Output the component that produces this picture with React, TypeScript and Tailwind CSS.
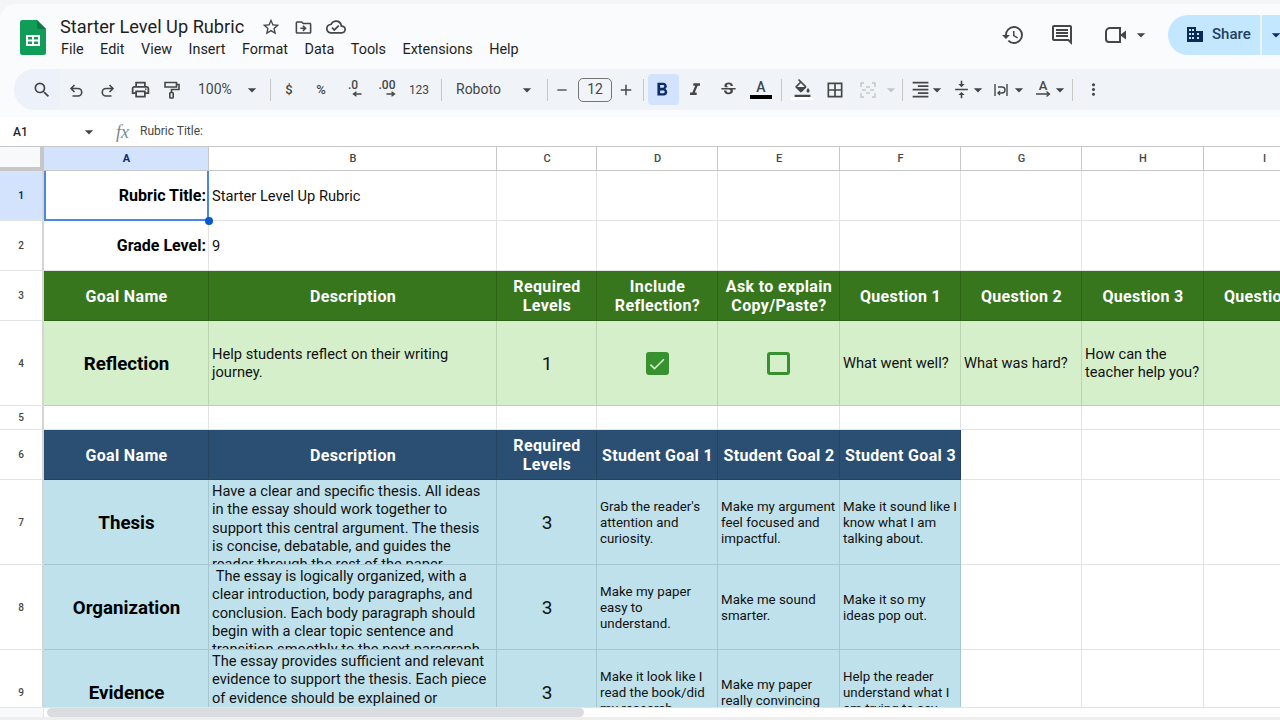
import React from "react";
import {
  MdStarBorder, MdOutlineDriveFileMove, MdOutlineCloudDone, MdHistory, MdOutlineComment,
  MdArrowDropDown, MdSearch, MdOutlinePrint, MdAdd, MdRemove,
  MdFormatBold, MdFormatItalic, MdStrikethroughS, MdFormatColorFill, MdBorderAll, MdFormatAlignRight,
  MdVerticalAlignCenter, MdMoreVert, MdCheck,
} from "react-icons/md";

const Caret = ({ cls = "text-[#444746]" }: { cls?: string }) => <MdArrowDropDown className={"text-[20px] shrink-0 " + cls} />;
const Divider = () => <div className="w-px h-[22px] bg-[#c7c7c7] shrink-0" />;

function Slot({ cls, children }: { cls: string; children?: React.ReactNode }) {
  return <div className={"flex items-center justify-center shrink-0 text-[#444746] " + cls}>{children}</div>;
}

function Logo() {
  return (
    <svg width="26" height="35" viewBox="0 0 26 35" className="shrink-0">
      <path d="M2.5 0H17l9 9v23.5a2.5 2.5 0 0 1-2.5 2.5h-21A2.5 2.5 0 0 1 0 32.500V2.500A2.500 2.500 0 0 1 2.500 0z" fill="#0f9d58" />
      <path d="M17 0l9 9h-7a2 2 0 0 1-2-2z" fill="#0b7a45" />
      <path d="M6 15h14v11H6zM8 17v2.500h4V17zm6 0v2.500h4V17zm-6 4.500V24h4v-2.500zm6 0V24h4v-2.500z" fill="#fff" fillRule="evenodd" />
    </svg>
  );
}

function UndoIcon({ flip }: { flip?: boolean }) {
  return (
    <svg width="14" height="14" viewBox="0 0 14 14" fill="none" stroke="#444746" strokeWidth="1.600" className={"mt-[2px] " + (flip ? "-scale-x-100" : "")}>
      <path d="M5.500 1L2 4.500 5.500 8M2.500 4.500H9a3.700 3.700 0 0 1 0 7.500H3.500" />
    </svg>
  );
}

function RollerIcon() {
  return (
    <svg width="16" height="18" viewBox="0 0 16 18" fill="none" stroke="#444746" strokeWidth="1.600">
      <path d="M1 1.500h11.500v4.500H1zM12.500 3.500H15v5H7.500v3" />
      <rect x="5.800" y="11.500" width="3.400" height="5.500" rx="0.800" />
    </svg>
  );
}

function VideoIcon() {
  return (
    <svg width="22" height="18" viewBox="0 0 22 18" fill="none" stroke="#444746" strokeWidth="2">
      <path d="M5 2h10v14H4a3 3 0 0 1-3-3V6a4 4 0 0 1 4-4z" />
      <path d="M15 9l6-4.500v9z" fill="#444746" stroke="none" />
    </svg>
  );
}

function BuildingIcon() {
  return (
    <svg width="16" height="15" viewBox="0 0 16 15" className="shrink-0">
      <path d="M0 0h9v4h7v11H0zM2 2v2h2V2zm3 0v2h2V2zM2 6v2h2V6zm3 0v2h2V6zM2 10v2h2v-2zm3 0v2h2v-2zm5-4v2h2V6zm0 4v2h2v-2z" fill="#0b2b55" fillRule="evenodd" />
    </svg>
  );
}

function Decimal({ label, right }: { label: string; right?: boolean }) {
  return (
    <div className="flex flex-col items-center leading-none">
      <span className="text-[12px] font-medium text-[#444746] leading-[12px] -mt-[3px]">{label}</span>
      <svg width="10" height="6" viewBox="0 0 10 6" className="ml-[8px]">
        {right ? <path d="M0.500 3h7M5.500 0.800L8.500 3 5.500 5.200" stroke="#444746" strokeWidth="1.400" fill="none" /> : <path d="M9.500 3h-7M4.500 0.800L1.500 3 4.500 5.200" stroke="#444746" strokeWidth="1.400" fill="none" />}
      </svg>
    </div>
  );
}

function MergeIcon() {
  return (
    <svg width="18" height="18" viewBox="0 0 18 18" fill="none" stroke="#c4c7c5" strokeWidth="1.500">
      <path d="M5 2H2v4M5 16H2v-4M13 2h3v4M13 16h3v-4M8 5v2M8 11v2M10 5v2M10 11v2" />
      <path d="M3 9h4M15 9h-4" />
    </svg>
  );
}

function WrapIcon() {
  return (
    <svg width="16" height="16" viewBox="0 0 16 16" fill="none" stroke="#444746" strokeWidth="1.400">
      <path d="M2 2v12M14 2v12M5 5h4a2.500 2.500 0 0 1 0 6H5M7 9l-2 2 2 2" />
    </svg>
  );
}

function RotateIcon() {
  return (
    <div className="flex flex-col items-center leading-none">
      <span className="text-[13px] font-medium text-[#444746] leading-[11px] -mt-[2px]">A</span>
      <svg width="15" height="6" viewBox="0 0 15 6" fill="none" stroke="#444746" strokeWidth="1.300">
        <path d="M0 3h13M10.500 0.500L13.500 3 10.500 5.500" />
      </svg>
    </div>
  );
}

function Header() {
  return (
    <div className="bg-[#f5f5f5] pt-[4px] shrink-0">
      <div className="bg-[#fafbfd] rounded-tl-[16px] h-[113px] flex flex-col">
        <div className="h-[65px] flex shrink-0">
          <div className="pl-[20px] pt-[16px]"><Logo /></div>
          <div className="pl-[14px] pt-[12px] flex flex-col">
            <div className="flex items-center h-[22px]">
              <span className="text-[18.200px] text-[#1f1f1f] leading-[22px] w-[202px] whitespace-nowrap">Starter Level Up Rubric</span>
              <MdStarBorder className="text-[20px] text-[#444746] ml-[-1px] mr-[13px]" />
              <MdOutlineDriveFileMove className="text-[19px] text-[#444746] mr-[13px]" />
              <MdOutlineCloudDone className="text-[20px] text-[#444746]" />
            </div>
            <div className="flex gap-[16.500px] text-[14.400px] text-[#1f1f1f] leading-[18px] mt-[3px] pl-[1px]">
              {["File", "Edit", "View", "Insert", "Format", "Data", "Tools", "Extensions", "Help"].map((m) => <span key={m}>{m}</span>)}
            </div>
          </div>
          <div className="ml-auto flex items-center h-[58px] pt-[3px]">
            <Slot cls="w-[32px]"><MdHistory className="text-[24px]" /></Slot>
            <Slot cls="w-[32px] ml-[17px]"><MdOutlineComment className="text-[24px]" /></Slot>
            <Slot cls="w-[32px] ml-[22px]"><VideoIcon /></Slot>
            <Slot cls="w-[16px] ml-[1px]"><Caret /></Slot>
            <div className="ml-[19px] w-[112px] h-[40px] rounded-l-full bg-[#c2e7ff] flex items-center overflow-hidden shrink-0">
              <div className="ml-[19px] shrink-0"><BuildingIcon /></div>
              <span className="text-[15px] font-medium ml-[9px] w-[48px] shrink-0 text-[#24405f]">Share</span>
              <div className="w-[2px] h-[40px] bg-[#eaf6fe] shrink-0" />
              <Caret cls="text-[#062e6f] ml-[4px]" />
            </div>
          </div>
        </div>
        <div className="h-[41px] ml-[14px] bg-[#f0f4f9] rounded-l-full flex items-center shrink-0">
          <div className="w-[46px] h-[41px] bg-[#edf2fa] rounded-l-full flex items-center pl-[18px] text-[#444746] shrink-0"><MdSearch className="text-[20px]" /></div>
          <Slot cls="w-[32px]"><UndoIcon /></Slot>
          <Slot cls="w-[32px]"><UndoIcon flip /></Slot>
          <Slot cls="w-[32px]"><MdOutlinePrint className="text-[21px]" /></Slot>
          <Slot cls="w-[32px]"><RollerIcon /></Slot>
          <Slot cls="w-[56px] justify-start pl-[10px]"><span className="text-[14px]">100%</span></Slot>
          <Slot cls="w-[16px]"><Caret /></Slot>
          <div className="w-[10px] shrink-0" />
          <Divider />
          <Slot cls="w-[32px] ml-[2px]"><span className="text-[13px] font-medium">$</span></Slot>
          <Slot cls="w-[32px]"><span className="text-[13px] font-medium">%</span></Slot>
          <Slot cls="w-[32px]"><Decimal label=".0" /></Slot>
          <Slot cls="w-[32px] ml-[2px]"><Decimal label=".00" right /></Slot>
          <Slot cls="w-[32px]"><span className="text-[12px]">123</span></Slot>
          <div className="w-[6px] shrink-0" />
          <Divider />
          <Slot cls="w-[60px] justify-start pl-[14px]"><span className="text-[14px]">Roboto</span></Slot>
          <Slot cls="w-[16px] ml-[17px]"><Caret /></Slot>
          <div className="w-[12px] shrink-0" />
          <Divider />
          <Slot cls="w-[28px]"><MdRemove className="text-[16px]" /></Slot>
          <div className="w-[34px] h-[24px] border border-[#747775] rounded-[5px] flex items-center justify-center text-[14px] text-[#444746] shrink-0 ml-[2px]">12</div>
          <Slot cls="w-[28px]"><MdAdd className="text-[18px]" /></Slot>
          <div className="w-[3px] shrink-0" />
          <Divider />
          <div className="w-[31px] h-[31px] ml-[4px] bg-[#d3e3fd] rounded-[4px] flex items-center justify-center shrink-0"><MdFormatBold className="text-[22px] text-[#0b2e6b] -ml-[3px]" /></div>
          <Slot cls="w-[32px]"><MdFormatItalic className="text-[20px]" /></Slot>
          <Slot cls="w-[34px]"><MdStrikethroughS className="text-[19px]" /></Slot>
          <Slot cls="w-[32px]">
            <div className="flex flex-col items-center">
              <span className="text-[14px] font-medium leading-[14px]">A</span>
              <div className="w-[22px] h-[4px] bg-black mt-[1px]" />
            </div>
          </Slot>
          <div className="w-[4px] shrink-0" />
          <Divider />
          <Slot cls="w-[40px]">
            <div className="flex flex-col items-center">
              <MdFormatColorFill className="text-[19px]" />
              <div className="w-[22px] h-[3px] bg-white -mt-[1px]" />
            </div>
          </Slot>
          <Slot cls="w-[26px]"><MdBorderAll className="text-[20px]" /></Slot>
          <Slot cls="w-[32px] ml-[4px]"><MergeIcon /></Slot>
          <Slot cls="w-[14px]"><Caret cls="text-[#c4c7c5]" /></Slot>
          <div className="w-[4px] shrink-0" />
          <Divider />
          <Slot cls="w-[24px] ml-[5px]"><MdFormatAlignRight className="text-[21px]" /></Slot>
          <Slot cls="w-[10px]"><Caret /></Slot>
          <Slot cls="w-[24px] ml-[7px]"><MdVerticalAlignCenter className="text-[19px]" /></Slot>
          <Slot cls="w-[10px]"><Caret /></Slot>
          <Slot cls="w-[24px] ml-[6px]"><WrapIcon /></Slot>
          <Slot cls="w-[10px] ml-[1px]"><Caret /></Slot>
          <Slot cls="w-[24px] ml-[7px]"><RotateIcon /></Slot>
          <Slot cls="w-[10px]"><Caret /></Slot>
          <div className="w-[7px] shrink-0" />
          <Divider />
          <Slot cls="w-[40px]"><MdMoreVert className="text-[19px]" /></Slot>
        </div>
      </div>
    </div>
  );
}

function FormulaBar() {
  return (
    <div className="h-[30px] bg-white border-b border-[#c7c7c7] flex items-center shrink-0">
      <span className="text-[12px] font-medium text-[#1f1f1f] w-[79px] pl-[13px]">A1</span>
      <Caret />
      <span className="font-['Liberation_Serif',serif] italic text-[18px] text-[#80868b] ml-[17px] w-[24px] leading-none">fx</span>
      <span className="text-[12px] text-[#444746] -mt-[2px]">Rubric Title:</span>
    </div>
  );
}

function ColHead({ label, active }: { label: string; active?: boolean }) {
  return (
    <div className={"flex items-center justify-center pt-[1px] pl-[1px] text-[11px] border-r border-b border-[#c7c7c7] " + (active ? "bg-[#d3e3fd] text-[#0b2e6b] font-bold" : "bg-white text-[#444746] font-medium")}>{label}</div>
  );
}

function RowHead({ n, active }: { n: number; active?: boolean }) {
  return (
    <div className={"flex items-center justify-center text-[10px] border-r-[2px] border-b border-r-[#d5d5d5] border-b-[#e3e3e3] " + (active ? "bg-[#d3e3fd] text-[#0b2e6b] font-bold" : "bg-white text-[#444746] font-medium")}>{n}</div>
  );
}

const Blank = () => <div className="bg-white border-r border-b border-[#e3e3e3]" />;

function GreenHead({ children }: { children: React.ReactNode }) {
  return <div className="bg-[#38761d] border-r border-b border-black/15 flex items-center justify-center text-center pt-[1px] pl-[1px] text-white font-bold text-[16px] leading-[19px] tracking-[0.35px] whitespace-nowrap overflow-hidden">{children}</div>;
}
function BlueHead({ children }: { children: React.ReactNode }) {
  return <div className="bg-[#2a4f72] border-r border-b border-black/15 flex items-center justify-center text-center pt-[1px] pl-[1px] text-white font-bold text-[16px] leading-[19px] tracking-[0.35px] whitespace-nowrap overflow-hidden">{children}</div>;
}
function GreenCell({ children, cls = "" }: { children?: React.ReactNode; cls?: string }) {
  return <div className={"bg-[#d6efcb] border-r border-b border-[#bcd3b2] flex items-center text-[#111] overflow-hidden whitespace-nowrap " + cls}>{children}</div>;
}
function BlueCell({ children, cls = "" }: { children?: React.ReactNode; cls?: string }) {
  return <div className={"bg-[#bfe1ec] border-r border-b border-[#a6c7d2] flex text-[#111] overflow-hidden whitespace-nowrap " + cls}>{children}</div>;
}
const GoalName = ({ t }: { t: string }) => <BlueCell cls="items-center justify-center pt-[2px] pl-[1px] font-bold text-[18.700px] text-black"><span>{t}</span></BlueCell>;
const Desc = ({ children }: { children: React.ReactNode }) => <BlueCell cls="items-start pl-[3px] pt-[2px] text-[14.670px] leading-[18.300px]"><div>{children}</div></BlueCell>;
const Num = ({ n }: { n: number }) => <BlueCell cls="items-center justify-center pt-[2px] pl-[1px] text-[19px]">{n}</BlueCell>;
const Goal = ({ children }: { children: React.ReactNode }) => <BlueCell cls="items-center pl-[3px] pt-[2px] text-[13.330px] leading-[16px]"><div>{children}</div></BlueCell>;

function Sheet() {
  return (
    <div className="relative flex-1 overflow-hidden bg-white">
      <div className="grid w-[1325px] grid-cols-[44px_165px_288px_100px_121px_122px_121px_121px_122px_121px] grid-rows-[24px_50px_50px_50px_85px_24px_50px_85px_85px_85px]">
        <div className="bg-[#f8f9fa] border-r-[4px] border-b-[4px] border-[#c7c7c7]" />
        <ColHead label="A" active />
        {["B", "C", "D", "E", "F", "G", "H", "I"].map((c) => <ColHead key={c} label={c} />)}

        <RowHead n={1} active />
        <div className="bg-white border-r border-b border-[#e3e3e3] flex items-center justify-end pr-[2px] pt-[1px] font-bold text-[16px] text-black">Rubric Title:</div>
        <div className="bg-white border-r border-b border-[#e3e3e3] flex items-center pl-[3px] text-[14.670px] text-[#111] whitespace-nowrap">Starter Level Up Rubric</div>
        {[0, 1, 2, 3, 4, 5, 6].map((i) => <Blank key={i} />)}

        <RowHead n={2} />
        <div className="bg-white border-r border-b border-[#e3e3e3] flex items-center justify-end pr-[2px] pt-[1px] font-bold text-[16px] text-black">Grade Level:</div>
        <div className="bg-white border-r border-b border-[#e3e3e3] flex items-center pl-[3px] text-[14.670px] text-[#111]">9</div>
        {[0, 1, 2, 3, 4, 5, 6].map((i) => <Blank key={i} />)}

        <RowHead n={3} />
        <GreenHead>Goal Name</GreenHead>
        <GreenHead>Description</GreenHead>
        <GreenHead>Required<br />Levels</GreenHead>
        <GreenHead>Include<br />Reflection?</GreenHead>
        <GreenHead>Ask to explain<br />Copy/Paste?</GreenHead>
        <GreenHead>Question 1</GreenHead>
        <GreenHead>Question 2</GreenHead>
        <GreenHead>Question 3</GreenHead>
        <GreenHead>Question 4</GreenHead>

        <RowHead n={4} />
        <GreenCell cls="justify-center pt-[2px] pl-[1px] font-bold text-[18.700px] text-black">Reflection</GreenCell>
        <GreenCell cls="pl-[3px] text-[14.670px] leading-[18.300px]"><div>Help students reflect on their writing<br />journey.</div></GreenCell>
        <GreenCell cls="justify-center pt-[2px] pl-[1px] text-[19px]">1</GreenCell>
        <GreenCell cls="justify-center pt-[1px]">
          <div className="w-[23px] h-[23px] rounded-[3px] bg-[#38912f] flex items-center justify-center"><MdCheck className="text-[20px] text-[#d6efcb]" /></div>
        </GreenCell>
        <GreenCell cls="justify-center pt-[1px]">
          <div className="w-[23px] h-[23px] rounded-[3px] border-[3px] border-[#38912f]" />
        </GreenCell>
        <GreenCell cls="pl-[3px] text-[14.670px]">What went well?</GreenCell>
        <GreenCell cls="pl-[3px] text-[14.670px]">What was hard?</GreenCell>
        <GreenCell cls="pl-[3px] text-[14.670px] leading-[18.300px]"><div>How can the<br />teacher help you?</div></GreenCell>
        <GreenCell />

        <RowHead n={5} />
        {[0, 1, 2, 3, 4, 5, 6, 7, 8].map((i) => <Blank key={i} />)}

        <RowHead n={6} />
        <BlueHead>Goal Name</BlueHead>
        <BlueHead>Description</BlueHead>
        <BlueHead>Required<br />Levels</BlueHead>
        <BlueHead>Student Goal 1</BlueHead>
        <BlueHead>Student Goal 2</BlueHead>
        <BlueHead>Student Goal 3</BlueHead>
        <Blank /><Blank /><Blank />

        <RowHead n={7} />
        <GoalName t="Thesis" />
        <Desc>Have a clear and specific thesis. All ideas<br />in the essay should work together to<br />support this central argument. The thesis<br />is concise, debatable, and guides the<br />reader through the rest of the paper.</Desc>
        <Num n={3} />
        <Goal>Grab the reader's<br />attention and<br />curiosity.</Goal>
        <Goal>Make my argument<br />feel focused and<br />impactful.</Goal>
        <Goal>Make it sound like I<br />know what I am<br />talking about.</Goal>
        <Blank /><Blank /><Blank />

        <RowHead n={8} />
        <GoalName t="Organization" />
        <Desc>&nbsp;The essay is logically organized, with a<br />clear introduction, body paragraphs, and<br />conclusion. Each body paragraph should<br />begin with a clear topic sentence and<br />transition smoothly to the next paragraph.</Desc>
        <Num n={3} />
        <Goal>Make my paper<br />easy to<br />understand.</Goal>
        <Goal>Make me sound<br />smarter.</Goal>
        <Goal>Make it so my<br />ideas pop out.</Goal>
        <Blank /><Blank /><Blank />

        <RowHead n={9} />
        <GoalName t="Evidence" />
        <Desc>The essay provides sufficient and relevant<br />evidence to support the thesis. Each piece<br />of evidence should be explained or<br />connected to the main argument.</Desc>
        <Num n={3} />
        <Goal>Make it look like I<br />read the book/did<br />my research.</Goal>
        <Goal>Make my paper<br />really convincing</Goal>
        <Goal>Help the reader<br />understand what I<br />am trying to say.</Goal>
        <Blank /><Blank /><Blank />
      </div>
      <div className="absolute left-[44px] top-[24px] w-[165px] h-[50px] border-l-2 border-r-2 border-b-2 border-[#4a86e8] pointer-events-none" />
      <div className="absolute left-[205px] top-[70px] w-[8px] h-[8px] rounded-full bg-[#0b57d0]" />
    </div>
  );
}

export default function App() {
  return (
    <div className="w-[1280px] h-[720px] overflow-hidden flex flex-col bg-white font-['Roboto',sans-serif]">
      <Header />
      <FormulaBar />
      <Sheet />
      <div className="h-[13px] shrink-0 bg-white flex border-t border-[#e3e3e3] border-b-[3px] border-b-[#eeeeee]">
        <div className="w-[44px] bg-[#f8f9fa] border-r border-[#e3e3e3]" />
        <div className="w-[537px] h-[9px] ml-[3px] rounded-full bg-[#dadce0]" />
      </div>
    </div>
  );
}
